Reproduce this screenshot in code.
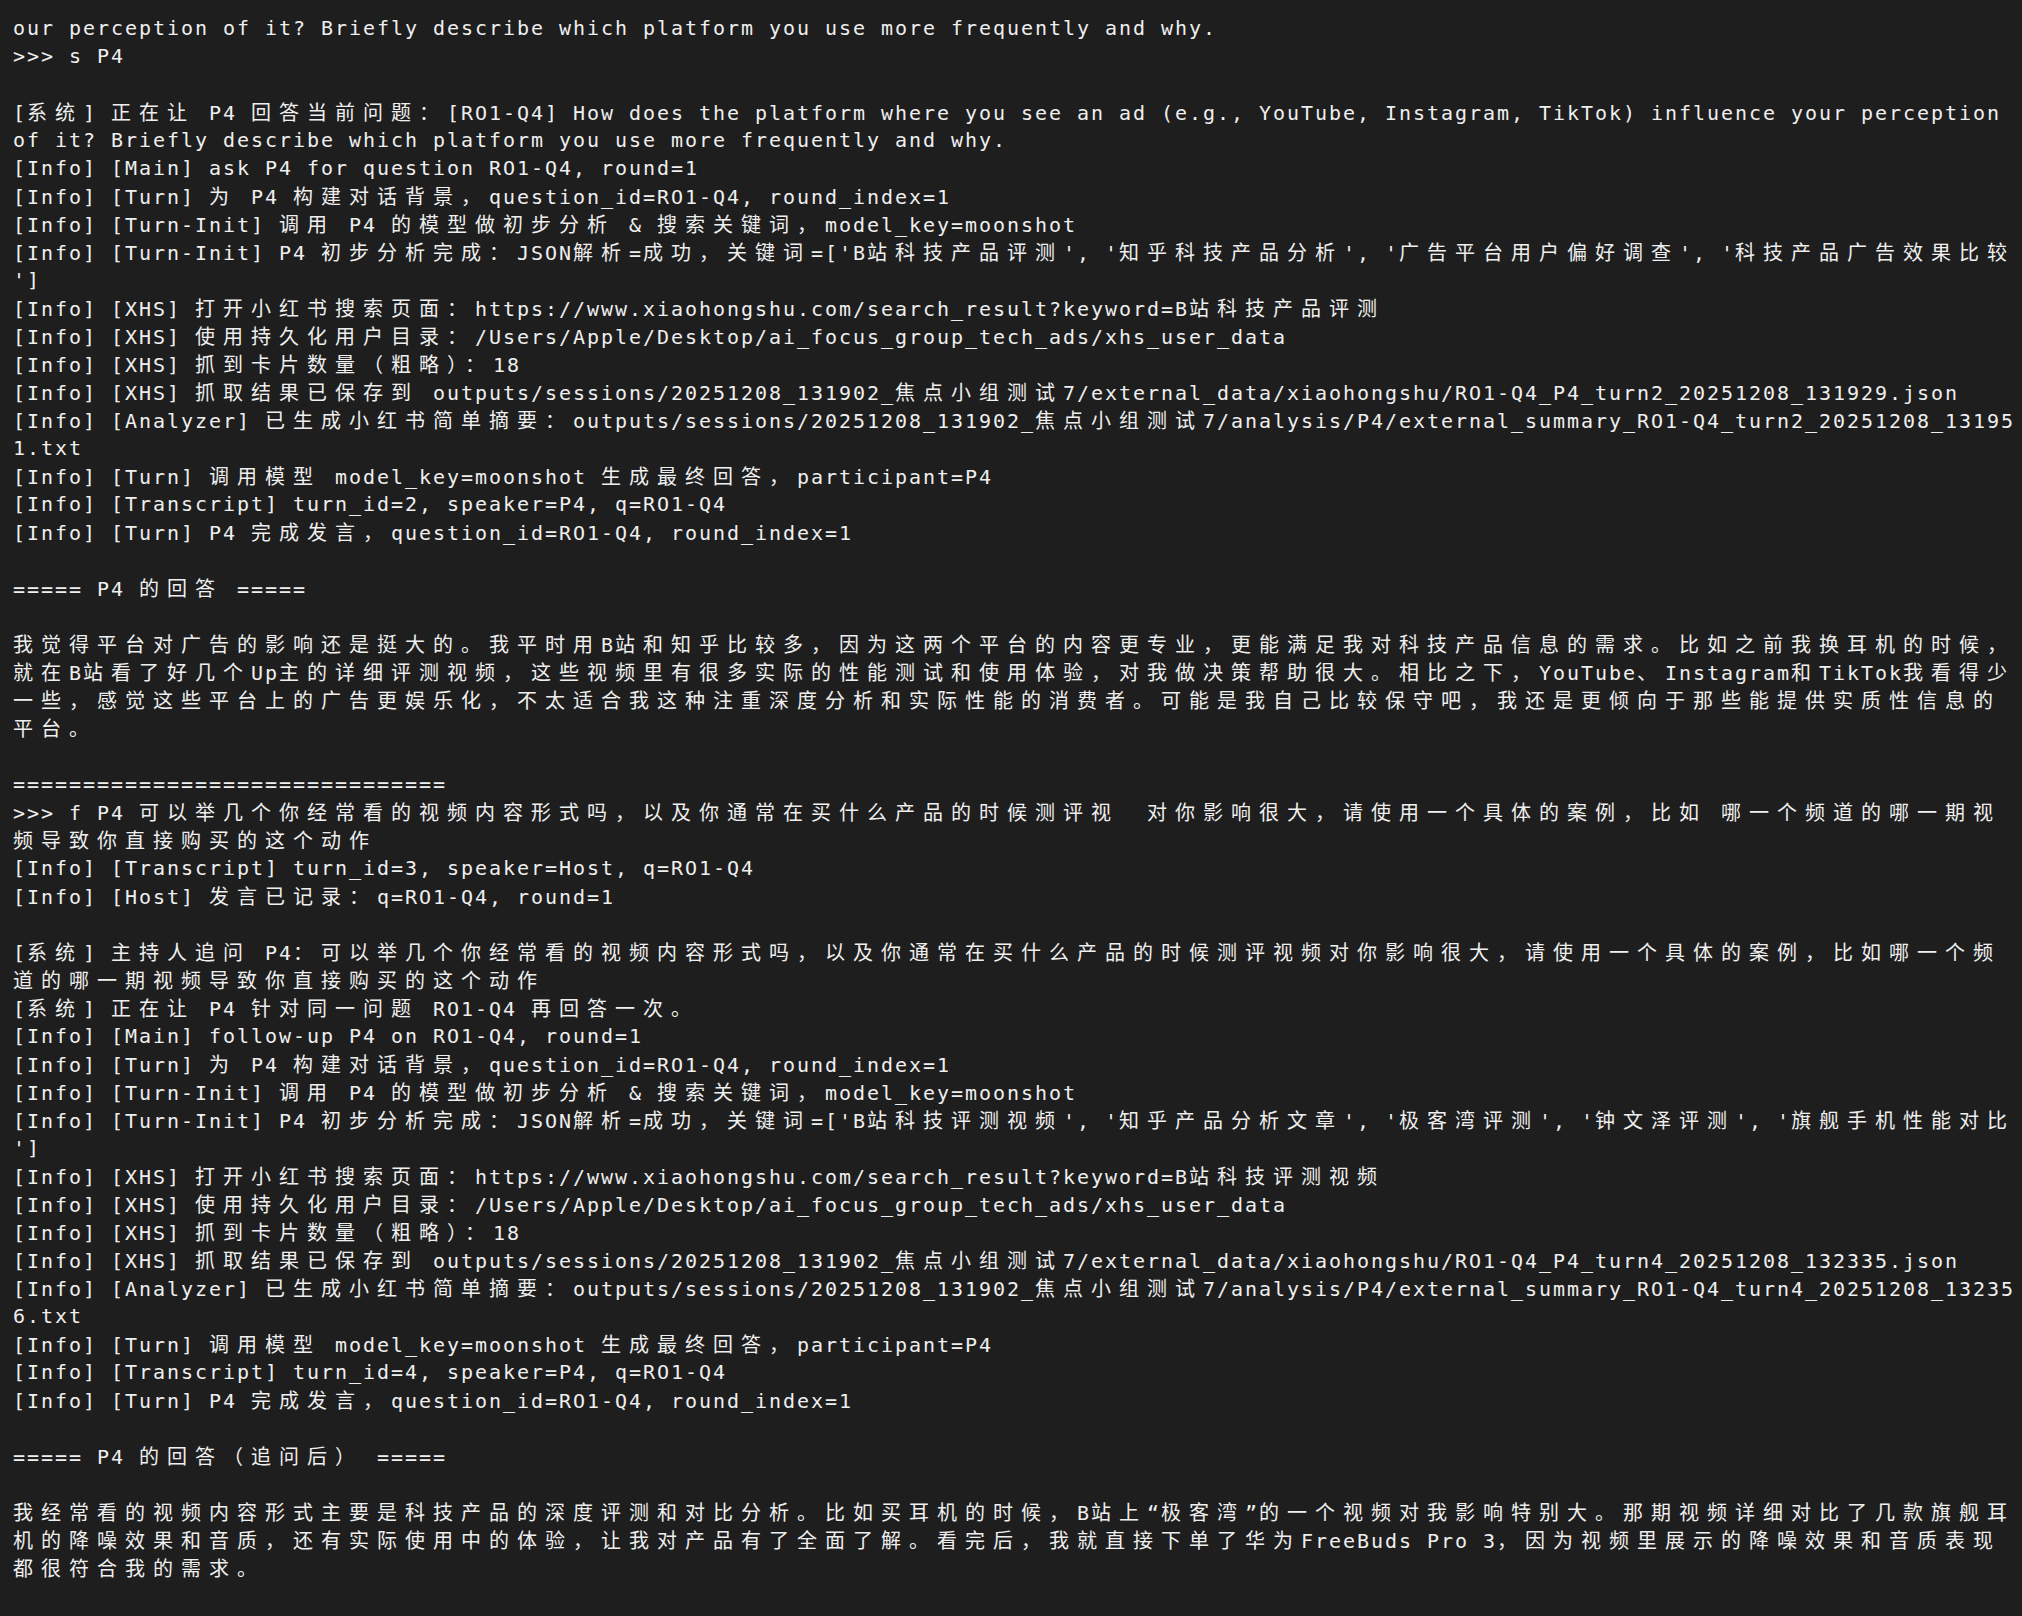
import React from "react";

const LINES: string[] = [
  "our perception of it? Briefly describe which platform you use more frequently and why.",
  ">>> s P4",
  "",
  "[系统] 正在让 P4 回答当前问题：[RO1-Q4] How does the platform where you see an ad (e.g., YouTube, Instagram, TikTok) influence your perception",
  "of it? Briefly describe which platform you use more frequently and why.",
  "[Info] [Main] ask P4 for question RO1-Q4, round=1",
  "[Info] [Turn] 为 P4 构建对话背景，question_id=RO1-Q4, round_index=1",
  "[Info] [Turn-Init] 调用 P4 的模型做初步分析 & 搜索关键词，model_key=moonshot",
  "[Info] [Turn-Init] P4 初步分析完成：JSON解析=成功，关键词=['B站科技产品评测', '知乎科技产品分析', '广告平台用户偏好调查', '科技产品广告效果比较",
  "']",
  "[Info] [XHS] 打开小红书搜索页面：https://www.xiaohongshu.com/search_result?keyword=B站科技产品评测",
  "[Info] [XHS] 使用持久化用户目录：/Users/Apple/Desktop/ai_focus_group_tech_ads/xhs_user_data",
  "[Info] [XHS] 抓到卡片数量（粗略）：18",
  "[Info] [XHS] 抓取结果已保存到 outputs/sessions/20251208_131902_焦点小组测试7/external_data/xiaohongshu/RO1-Q4_P4_turn2_20251208_131929.json",
  "[Info] [Analyzer] 已生成小红书简单摘要：outputs/sessions/20251208_131902_焦点小组测试7/analysis/P4/external_summary_RO1-Q4_turn2_20251208_13195",
  "1.txt",
  "[Info] [Turn] 调用模型 model_key=moonshot 生成最终回答，participant=P4",
  "[Info] [Transcript] turn_id=2, speaker=P4, q=RO1-Q4",
  "[Info] [Turn] P4 完成发言，question_id=RO1-Q4, round_index=1",
  "",
  "===== P4 的回答 =====",
  "",
  "我觉得平台对广告的影响还是挺大的。我平时用B站和知乎比较多，因为这两个平台的内容更专业，更能满足我对科技产品信息的需求。比如之前我换耳机的时候，",
  "就在B站看了好几个Up主的详细评测视频，这些视频里有很多实际的性能测试和使用体验，对我做决策帮助很大。相比之下，YouTube、Instagram和TikTok我看得少",
  "一些，感觉这些平台上的广告更娱乐化，不太适合我这种注重深度分析和实际性能的消费者。可能是我自己比较保守吧，我还是更倾向于那些能提供实质性信息的",
  "平台。",
  "",
  "===============================",
  ">>> f P4 可以举几个你经常看的视频内容形式吗，以及你通常在买什么产品的时候测评视  对你影响很大，请使用一个具体的案例，比如 哪一个频道的哪一期视",
  "频导致你直接购买的这个动作",
  "[Info] [Transcript] turn_id=3, speaker=Host, q=RO1-Q4",
  "[Info] [Host] 发言已记录：q=RO1-Q4, round=1",
  "",
  "[系统] 主持人追问 P4：可以举几个你经常看的视频内容形式吗，以及你通常在买什么产品的时候测评视频对你影响很大，请使用一个具体的案例，比如哪一个频",
  "道的哪一期视频导致你直接购买的这个动作",
  "[系统] 正在让 P4 针对同一问题 RO1-Q4 再回答一次。",
  "[Info] [Main] follow-up P4 on RO1-Q4, round=1",
  "[Info] [Turn] 为 P4 构建对话背景，question_id=RO1-Q4, round_index=1",
  "[Info] [Turn-Init] 调用 P4 的模型做初步分析 & 搜索关键词，model_key=moonshot",
  "[Info] [Turn-Init] P4 初步分析完成：JSON解析=成功，关键词=['B站科技评测视频', '知乎产品分析文章', '极客湾评测', '钟文泽评测', '旗舰手机性能对比",
  "']",
  "[Info] [XHS] 打开小红书搜索页面：https://www.xiaohongshu.com/search_result?keyword=B站科技评测视频",
  "[Info] [XHS] 使用持久化用户目录：/Users/Apple/Desktop/ai_focus_group_tech_ads/xhs_user_data",
  "[Info] [XHS] 抓到卡片数量（粗略）：18",
  "[Info] [XHS] 抓取结果已保存到 outputs/sessions/20251208_131902_焦点小组测试7/external_data/xiaohongshu/RO1-Q4_P4_turn4_20251208_132335.json",
  "[Info] [Analyzer] 已生成小红书简单摘要：outputs/sessions/20251208_131902_焦点小组测试7/analysis/P4/external_summary_RO1-Q4_turn4_20251208_13235",
  "6.txt",
  "[Info] [Turn] 调用模型 model_key=moonshot 生成最终回答，participant=P4",
  "[Info] [Transcript] turn_id=4, speaker=P4, q=RO1-Q4",
  "[Info] [Turn] P4 完成发言，question_id=RO1-Q4, round_index=1",
  "",
  "===== P4 的回答（追问后） =====",
  "",
  "我经常看的视频内容形式主要是科技产品的深度评测和对比分析。比如买耳机的时候，B站上“极客湾”的一个视频对我影响特别大。那期视频详细对比了几款旗舰耳",
  "机的降噪效果和音质，还有实际使用中的体验，让我对产品有了全面了解。看完后，我就直接下单了华为FreeBuds Pro 3，因为视频里展示的降噪效果和音质表现",
  "都很符合我的需求。",
];

const WIDE = /[\u1100-\u115F\u2E80-\u303E\u3040-\uA4CF\uAC00-\uD7A3\uF900-\uFAFF\uFE30-\uFE4F\uFF00-\uFF60\uFFE0-\uFFE6]/;

type Run = { t: string; wide: boolean };

function splitRuns(text: string): Run[] {
  const runs: Run[] = [];
  let cur = "";
  let curWide = false;
  for (const ch of text) {
    const w = WIDE.test(ch);
    if (cur && w !== curWide) {
      runs.push({ t: cur, wide: curWide });
      cur = "";
    }
    cur += ch;
    curWide = w;
  }
  if (cur) runs.push({ t: cur, wide: curWide });
  return runs;
}

function TermLine({ text }: { text: string }) {
  const runs = splitRuns(text);
  return (
    <div className="h-[28px] leading-[28px] whitespace-pre overflow-visible">
      {runs.map((r, i) =>
        r.wide ? (
          <span
            key={i}
            className="font-[family-name:'Noto_Sans_CJK_SC',sans-serif] text-[20px] tracking-[8px]"
          >
            {r.t}
          </span>
        ) : (
          <span
            key={i}
            className="font-[family-name:'DejaVu_Sans_Mono','Noto_Sans_CJK_SC',monospace] text-[20px] tracking-[1.959px]"
          >
            {r.t}
          </span>
        )
      )}
    </div>
  );
}

export default function App() {
  return (
    <div className="w-[2022px] h-[1616px] overflow-hidden bg-[#1e1e1e] text-[#efefef] pl-[13px] pt-[14px]">
      {LINES.map((l, i) => (
        <TermLine key={i} text={l} />
      ))}
    </div>
  );
}
